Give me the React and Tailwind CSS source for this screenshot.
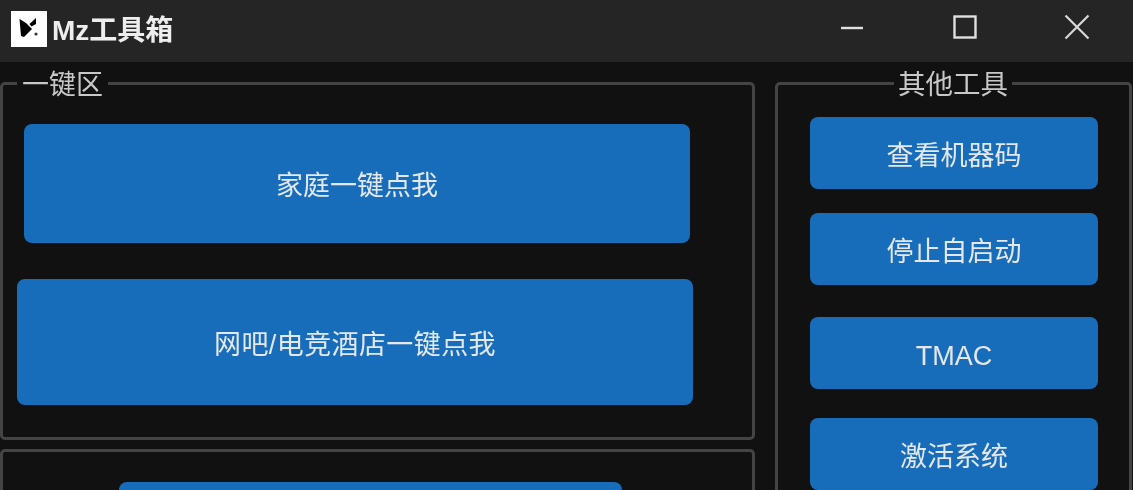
import React from "react";

function ActionButton({ className, children }) {
  return (
    <button
      className={`flex items-center justify-center rounded-[8px] bg-[#186dba] pt-[6px] text-[27px] leading-none text-[#e4e8ec] ${className}`}
    >
      {children}
    </button>
  );
}

function Legend({ className, children }) {
  return (
    <span
      className={`absolute top-[-18px] bg-[#111111] leading-[36px] text-[#c8c8c8] ${className}`}
    >
      {children}
    </span>
  );
}

export default function App() {
  return (
    <div className="flex h-[490px] w-[1133px] flex-col overflow-hidden bg-[#111111] font-['Liberation_Sans','Noto_Sans_CJK_SC',sans-serif] blur-[0.7px]">
      {/* Title bar */}
      <header className="flex h-[62px] shrink-0 items-center bg-[#252525] pb-[4px]">
        <div className="ml-[11px] h-[36px] w-[36px] bg-white">
          <svg width="36" height="36" viewBox="0 0 36 36">
            <path d="M8.5 8 L15 12 L21 18 L13 26 L10 25 Z" fill="#000" />
            <path d="M25 7 L25 13 L20.5 15.5 L18.5 13 Z" fill="#000" />
            <circle cx="25" cy="23" r="1.6" fill="#333" />
          </svg>
        </div>
        <span className="ml-[5px] mt-[4px] text-[28px] font-bold leading-none text-[#eeeeee]">Mz工具箱</span>
        <div className="mb-[4px] ml-auto flex items-center">
          <svg width="24" height="24" viewBox="0 0 24 24" className="mr-[89px]">
            <path d="M1 13 H23" stroke="#e0e0e0" strokeWidth="2.4" />
          </svg>
          <svg width="24" height="24" viewBox="0 0 24 24" className="mr-[87px]">
            <rect x="1.5" y="1.5" width="21" height="21" fill="none" stroke="#e0e0e0" strokeWidth="2.4" />
          </svg>
          <svg width="26" height="26" viewBox="0 0 26 26" className="mr-[43px]">
            <path d="M1.5 1.5 L24.5 24.5 M24.5 1.5 L1.5 24.5" stroke="#d8d8d8" strokeWidth="2.2" />
          </svg>
        </div>
      </header>

      {/* Body */}
      <main className="flex min-h-0 flex-1 items-start pt-[20px]">
        <div className="flex w-[755px] shrink-0 flex-col gap-[9px]">
          <section className="relative flex h-[358px] flex-col rounded-[5px] border-[3px] border-[#444444] pl-[14px] pt-[39px]">
            <Legend className="left-[14px] px-[5px] text-[27px]">一键区</Legend>
            <ActionButton className="ml-[7px] h-[119px] w-[666px]">家庭一键点我</ActionButton>
            <ActionButton className="mt-[36px] h-[126px] w-[676px] tracking-[0.4px]">网吧/电竞酒店一键点我</ActionButton>
          </section>
          <section className="flex h-[120px] flex-col rounded-[5px] border-[3px] border-[#444444] pl-[116px] pt-[30px]">
            <ActionButton className="h-[80px] w-[503px]" />
          </section>
        </div>
        <section className="relative ml-[20px] flex h-[450px] w-[357px] shrink-0 flex-col rounded-[5px] border-[3px] border-[#444444] pl-[32px] pt-[32px]">
          <Legend className="left-[116px] px-[4px] text-[27.5px]">其他工具</Legend>
          <ActionButton className="h-[72px] w-[288px]">查看机器码</ActionButton>
          <ActionButton className="mt-[24px] h-[72px] w-[288px]">停止自启动</ActionButton>
          <ActionButton className="mt-[32px] h-[72px] w-[288px]">TMAC</ActionButton>
          <ActionButton className="mt-[29px] h-[72px] w-[288px]">激活系统</ActionButton>
        </section>
      </main>
    </div>
  );
}
